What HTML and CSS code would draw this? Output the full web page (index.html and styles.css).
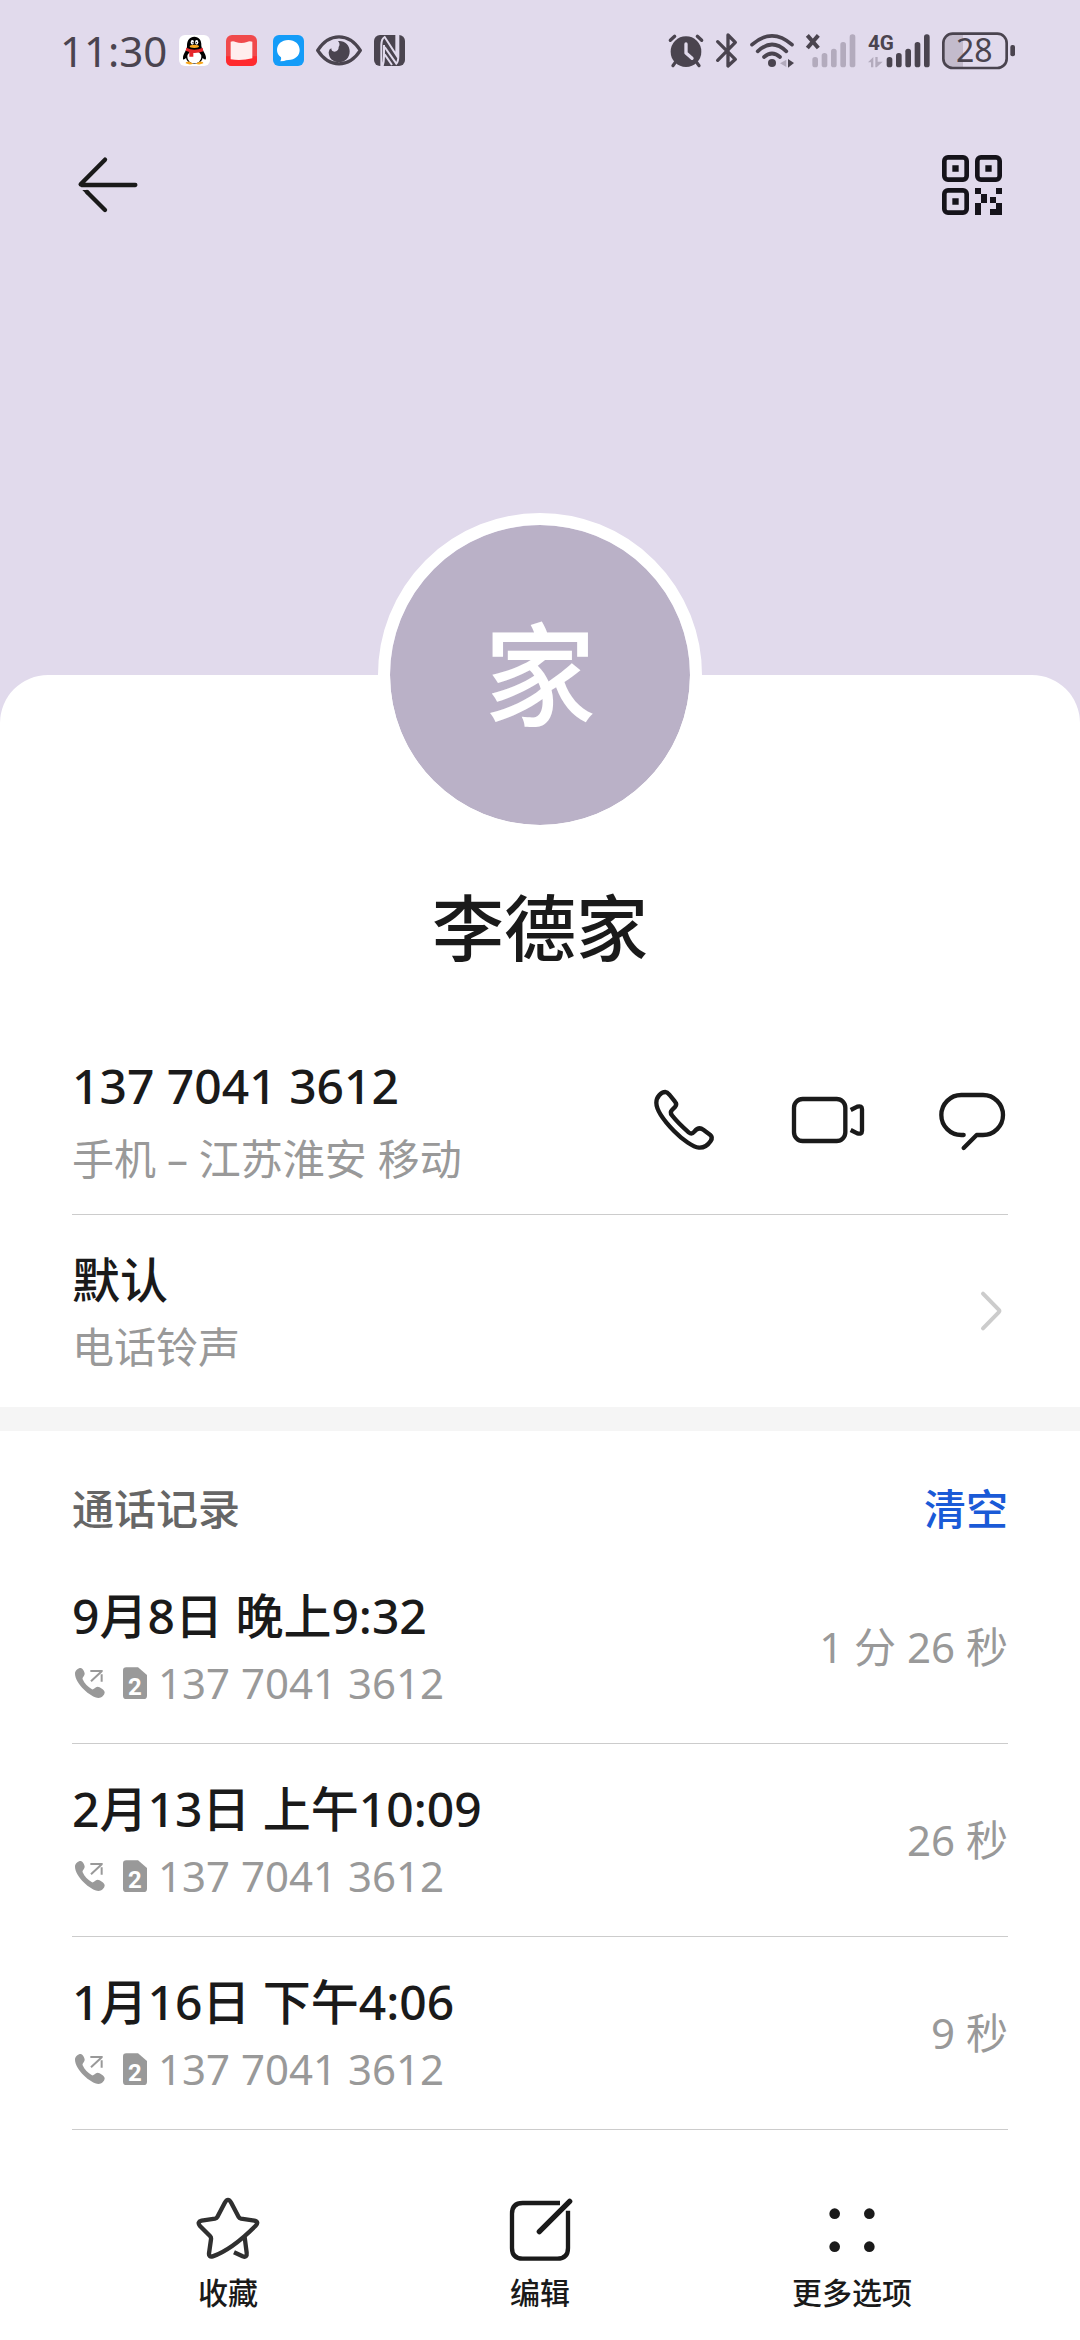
FILE: index.html
```html
<!DOCTYPE html>
<html lang="zh-CN">
<head>
    <meta charset="UTF-8">
    <meta name="viewport" content="width=device-width, initial-scale=1.0">
    <title>李德家</title>
    <link rel="stylesheet" href="styles.css">
</head>
<body>
    <!-- 共用图标 -->
    <svg class="sprite" aria-hidden="true">
        <symbol id="call-out" viewBox="0 0 108 108">
            <path fill="#999" d="M26 9C31 9 38 20 38 26C38 33 30 37 32 43C37 55 48 66 60 73C65 75 69 65 77 65C83 65 98 75 98 82C98 91 88 99 80 99C55 97 9 55 9 26C9 17 18 9 26 9Z"/>
            <path fill="none" stroke="#999" stroke-width="6" d="M55 18H92M57 49L90 18M89 28V50"/>
        </symbol>
    </svg>

    <header class="hero">
        <div class="status-bar">
            <div class="status-left">
                <span class="time">11:30</span>
                <svg class="app-icon" viewBox="0 0 93 93">
                    <rect width="93" height="93" rx="18" fill="#fff"/>
                    <path fill="#000" d="M46 5C60 5 68 16 67 32C68 44 81 56 81 68C81 77 75 73 71 69Q68 86 46 86Q24 86 21 69C17 73 11 77 12 68C12 56 25 44 24 32C24 16 32 5 46 5Z"/>
                    <ellipse cx="46" cy="66" rx="21" ry="19" fill="#fff"/>
                    <ellipse cx="40" cy="22" rx="5" ry="7" fill="#fff"/>
                    <ellipse cx="53" cy="22" rx="5" ry="7" fill="#fff"/>
                    <circle cx="42" cy="23" r="2"/>
                    <circle cx="52" cy="23" r="2"/>
                    <ellipse cx="46" cy="34" rx="14" ry="5" fill="#f9a71c"/>
                    <path fill="#e5262b" d="M22 38Q46 50 71 38L73 49Q58 55 43 54V65H31V51L20 47Z"/>
                    <path fill="#f9a71c" d="M20 85Q20 79 32 80L43 86Q32 91 20 85ZM73 85Q73 79 61 80L50 86Q61 91 73 85Z"/>
                </svg>
                <svg class="app-icon" viewBox="0 0 93 93">
                    <rect width="93" height="93" rx="18" fill="#f04a4c"/>
                    <path fill="#ff2a2e" d="M0 64H93V75Q93 93 75 93H18Q0 93 0 75Z"/>
                    <path fill="#ffeeee" d="M14 20Q22 17 29 21Q46 27 63 21Q70 17 79 20V70Q46 78 14 73Z"/>
                </svg>
                <svg class="app-icon" viewBox="0 0 93 93">
                    <rect width="93" height="93" rx="18" fill="#149cf8"/>
                    <path fill="#fff" d="M46 15C66 15 80 28 80 45C80 62 66 75 46 75Q39 75 33 78L22 79Q26 74 24 67C16 61 12 53 12 45C12 28 26 15 46 15Z"/>
                </svg>
                <svg class="eye-icon" viewBox="0 0 138 93">
                    <path fill="none" stroke="#4a444f" stroke-width="10" stroke-linejoin="round" d="M5 46C40-8 98-8 133 46C98 100 40 100 5 46Z"/>
                    <path fill="#4a444f" d="M66 18C86 16 101 30 101 49C101 69 87 82 69 82C51 82 38 69 38 52Q39 42 46 40Q46 50 55 50Q68 49 68 36Q74 27 66 18Z"/>
                </svg>
                <svg class="app-icon" viewBox="0 0 93 93">
                    <rect width="93" height="93" rx="18" fill="#4a444f"/>
                    <path fill="none" stroke="#e1daec" stroke-width="6" d="M22 93V30Q22 12 32 6L67 60V0M30 30V62Q30 82 26 93M32 36L67 86Q73 80 73 62V0M32 58L54 90"/>
                </svg>
            </div>
            <div class="status-right">
                <svg class="alarm-icon" viewBox="0 0 108 120">
                    <circle cx="54" cy="62" r="46" fill="#4a444f"/>
                    <path fill="none" stroke="#4a444f" stroke-width="10" stroke-linecap="round" d="M7 28L20 16M88 16L101 28M22 94L15 104M86 94L93 104"/>
                    <path fill="none" stroke="#e1daec" stroke-width="10" stroke-linecap="round" stroke-linejoin="round" d="M54 39V66L72 82"/>
                </svg>
                <svg class="bluetooth-icon" viewBox="0 0 66 120">
                    <path fill="none" stroke="#4a444f" stroke-width="10" stroke-linecap="round" stroke-linejoin="round" d="M5 32L58 85L36 105V12L58 34L5 88"/>
                </svg>
                <svg class="wifi-icon" viewBox="0 0 132 120">
                    <path fill="none" stroke="#4a444f" stroke-width="11" stroke-linecap="round" d="M6 41Q66-12 126 41M23 61Q66 20 109 61M42 78Q66 57 90 78"/>
                    <circle cx="66" cy="96" r="12" fill="#4a444f"/>
                    <path fill="#b3abbd" d="M90 97L109 86V108Z"/>
                    <path fill="#4a444f" d="M114 84L132 96L114 110Z"/>
                </svg>
                <svg class="signal-icon" viewBox="0 0 150 120">
                    <path stroke="#4a444f" stroke-width="12" d="M4 13L37 51M37 13L4 51"/>
                    <g fill="#b3abbd">
                        <rect x="19" y="78" width="17" height="31" rx="8"/>
                        <rect x="47" y="66" width="17" height="43" rx="8"/>
                        <rect x="75" y="53" width="17" height="56" rx="8"/>
                        <rect x="103" y="33" width="17" height="76" rx="8"/>
                        <rect x="131" y="10" width="17" height="99" rx="8"/>
                    </g>
                </svg>
                <svg class="network-icon" viewBox="0 0 186 120">
                    <text class="network-type" x="0" y="57">4G</text>
                    <path fill="#b3abbd" d="M0 94L16 78V109H9V94ZM22 78H29V92H44L26 109H22Z"/>
                    <g fill="#4a444f">
                        <rect x="56" y="78" width="17" height="31" rx="8"/>
                        <rect x="84" y="66" width="17" height="43" rx="8"/>
                        <rect x="112" y="53" width="17" height="56" rx="8"/>
                        <rect x="140" y="33" width="17" height="76" rx="8"/>
                        <rect x="168" y="10" width="17" height="99" rx="8"/>
                    </g>
                </svg>
                <svg class="battery-icon" viewBox="0 0 219 120">
                    <path fill="#c3bbcc" d="M63 8V111H32Q4 111 4 83V36Q4 8 32 8Z"/>
                    <rect x="4" y="8" width="190" height="103" rx="28" fill="none" stroke="#4a444f" stroke-width="8"/>
                    <rect x="205" y="42" width="14" height="34" rx="6" fill="#4a444f"/>
                    <text class="battery-level" x="97" y="93" text-anchor="middle">28</text>
                </svg>
            </div>
        </div>
        <nav class="toolbar">
            <button class="icon-button" aria-label="返回">
                <svg viewBox="0 0 216 216">
                    <path class="line" d="M99 32L26 106L30 108H190"/>
                    <path class="line" d="M45 129L99 183"/>
                    <path fill="#1a1a1a" d="M31 123H48L54 130L45 137Z"/>
                </svg>
            </button>
            <button class="icon-button" aria-label="二维码">
                <svg viewBox="0 0 216 216">
                    <g fill="none" stroke="#15131a" stroke-width="14">
                        <rect x="25" y="25" width="67" height="67" rx="11"/>
                        <rect x="124" y="25" width="67" height="67" rx="11"/>
                        <rect x="25" y="124" width="67" height="67" rx="11"/>
                    </g>
                    <path fill="#15131a" d="M49 49h19v19h-19zM148 49h19v19h-19zM49 148h19v19h-19zM117 117h18v18h-18zM180 117h18v18h-18zM135 135h18v27h-18zM162 144h18v18h-18zM117 162h18v36h-18zM180 162h18v36h-18zM162 180h18v18h-18z"/>
                </svg>
            </button>
        </nav>
    </header>

    <main class="sheet">
        <div class="avatar">家</div>
        <h1 class="name">李德家</h1>

        <section class="row contact">
            <div class="row-text">
                <p class="title">137 7041 3612</p>
                <p class="sub">手机 – 江苏淮安 移动</p>
            </div>
            <div class="actions">
                <button class="icon-button" aria-label="拨打电话">
                    <svg viewBox="0 0 216 216">
                        <path class="line" d="M52 24C58 24 61 28 65 33L81 53C86 58 86 63 81 69L72 78C67 83 67 88 72 94C88 114 105 130 122 145C128 150 134 149 139 143C147 133 156 130 166 137L186 152C193 158 193 164 188 171C180 183 169 192 153 191C136 189 104 168 78 141C52 114 25 79 25 56C25 39 39 24 52 24Z"/>
                    </svg>
                </button>
                <button class="icon-button" aria-label="视频通话">
                    <svg viewBox="0 0 216 216">
                        <rect class="line" x="6" y="45" width="154" height="126" rx="26"/>
                        <path class="line butt" d="M176 78L196 68Q210 64 210 76V140Q210 152 196 148L176 138"/>
                    </svg>
                </button>
                <button class="icon-button" aria-label="发送信息">
                    <svg viewBox="0 0 216 216">
                        <path class="line" d="M83 153H76A60 60 0 0 1 76 33H141A60 60 0 0 1 141 153H122L83 192"/>
                    </svg>
                </button>
            </div>
        </section>

        <section class="row ringtone">
            <div class="row-text">
                <p class="title">默认</p>
                <p class="sub">电话铃声</p>
            </div>
            <svg class="chevron" viewBox="0 0 108 144">
                <path d="M33 20L80 68Q84 72 80 76L33 124"/>
            </svg>
        </section>

        <section class="call-log">
            <div class="log-header">
                <h2>通话记录</h2>
                <button class="clear">清空</button>
            </div>
            <div class="row">
                <div class="row-text">
                    <p class="title">9月8日 晚上9:32</p>
                    <p class="sub">
                        <svg class="call-icon"><use href="#call-out"/></svg>
                        <svg class="sim-icon" viewBox="0 0 102 108">
                            <path d="M31 7H66L93 30V92Q93 102 83 102H31Q21 102 21 92V17Q21 7 31 7Z"/>
                            <text x="57" y="89" text-anchor="middle">2</text>
                        </svg>
                        <span>137 7041 3612</span>
                    </p>
                </div>
                <span class="duration">1 分 26 秒</span>
            </div>
            <div class="row">
                <div class="row-text">
                    <p class="title">2月13日 上午10:09</p>
                    <p class="sub">
                        <svg class="call-icon"><use href="#call-out"/></svg>
                        <svg class="sim-icon" viewBox="0 0 102 108">
                            <path d="M31 7H66L93 30V92Q93 102 83 102H31Q21 102 21 92V17Q21 7 31 7Z"/>
                            <text x="57" y="89" text-anchor="middle">2</text>
                        </svg>
                        <span>137 7041 3612</span>
                    </p>
                </div>
                <span class="duration">26 秒</span>
            </div>
            <div class="row">
                <div class="row-text">
                    <p class="title">1月16日 下午4:06</p>
                    <p class="sub">
                        <svg class="call-icon"><use href="#call-out"/></svg>
                        <svg class="sim-icon" viewBox="0 0 102 108">
                            <path d="M31 7H66L93 30V92Q93 102 83 102H31Q21 102 21 92V17Q21 7 31 7Z"/>
                            <text x="57" y="89" text-anchor="middle">2</text>
                        </svg>
                        <span>137 7041 3612</span>
                    </p>
                </div>
                <span class="duration">9 秒</span>
            </div>
        </section>

        <nav class="bottom-bar">
            <button>
                <svg viewBox="0 0 216 216">
                    <path class="line star" d="M98 27Q108 8 118 27L140 69Q142 73 147 74L187 80Q202 84 191 95C160 126 110 170 62 187Q50 190 51 178L57 136Q58 130 54 126L24 96Q14 84 29 80L69 74Q74 73 76 69Z"/>
                    <path class="line star butt" d="M158 130L164 176Q166 192 152 187L126 175"/>
                </svg>
                收藏
            </button>
            <button>
                <svg viewBox="0 0 216 216">
                    <path class="line butt" d="M168 27H56Q24 27 24 59V162Q24 194 56 194H160Q192 194 192 162V50"/>
                    <path class="line pen" d="M106 113L197 22"/>
                </svg>
                编辑
            </button>
            <button>
                <svg viewBox="0 0 216 216" fill="#1a1a1a">
                    <circle cx="56" cy="59" r="16"/>
                    <circle cx="160" cy="59" r="16"/>
                    <circle cx="56" cy="158" r="16"/>
                    <circle cx="160" cy="158" r="16"/>
                </svg>
                更多选项
            </button>
        </nav>
    </main>
</body>
</html>
```
FILE: styles.css
```css
* {
    margin: 0;
    padding: 0;
    box-sizing: border-box;
}
body {
    min-height: 100vh;
    display: flex;
    flex-direction: column;
    background-color: #e1daec;
    color: #1a1a1a;
    font-family: "Noto Sans", "Noto Sans CJK SC", sans-serif;
}
button {
    background: none;
    border: none;
    color: inherit;
    font-family: inherit;
    cursor: pointer;
}
svg {
    display: block;
    flex-shrink: 0;
    overflow: visible;
}
.sprite {
    display: none;
}
.line {
    fill: none;
    stroke: #1a1a1a;
    stroke-width: 13;
    stroke-linecap: round;
    stroke-linejoin: round;
}
.butt {
    stroke-linecap: butt;
}
.star {
    stroke: #303030;
}
.pen {
    stroke-width: 16;
}

/* 顶部区域 */
.hero {
    padding-bottom: 406px;
}
.status-bar {
    display: flex;
    justify-content: space-between;
    align-items: center;
    height: 101px;
    padding: 0 65px 0 60px;
    color: #4a444f;
}
.status-left, .status-right {
    display: flex;
    align-items: center;
    gap: 12px;
}
.time {
    font-size: 42px;
    line-height: 60px;
}
.app-icon {
    width: 31px;
    height: 31px;
}
.app-icon + .app-icon {
    margin-left: 4px;
}
.eye-icon {
    width: 46px;
    height: 31px;
}
.status-right svg {
    height: 40px;
}
.alarm-icon {
    width: 36px;
}
.bluetooth-icon {
    width: 22px;
}
.wifi-icon {
    width: 44px;
}
.signal-icon {
    width: 50px;
}
.network-icon {
    width: 62px;
}
.battery-icon {
    width: 73px;
}
.network-type {
    font-family: Roboto, sans-serif;
    font-size: 62px;
    font-weight: 700;
    fill: #4a444f;
}
.battery-level {
    font-size: 96px;
    fill: #4a444f;
}
.toolbar {
    display: flex;
    justify-content: space-between;
    padding: 48px 72px;
}
.icon-button, .icon-button svg {
    width: 72px;
    height: 72px;
    display: block;
}

/* 白色面板 */
.sheet {
    flex: 1;
    display: flex;
    flex-direction: column;
    background-color: #fff;
    border-radius: 48px 48px 0 0;
}
.avatar {
    display: flex;
    justify-content: center;
    align-items: center;
    align-self: center;
    width: 324px;
    height: 324px;
    margin-top: -162px;
    border: 12px solid #fff;
    border-radius: 50%;
    background-color: #bab1c7;
    background-clip: padding-box;
    color: #fff;
    font-size: 112px;
    font-weight: 500;
    line-height: 1;
}
.name {
    margin: 42px 72px 0;
    font-size: 72px;
    font-weight: 500;
    line-height: 96px;
    text-align: center;
}
.row {
    display: flex;
    justify-content: space-between;
    align-items: center;
    margin: 0 72px;
    padding: 29px 0;
    border-bottom: 1px solid #ccc;
}
.title {
    font-size: 48px;
    font-weight: 500;
    line-height: 72px;
}
.sub {
    display: flex;
    align-items: center;
    gap: 8px;
    font-size: 42px;
    line-height: 62px;
    color: #999;
}
.contact {
    margin-top: 50px;
    padding: 25px 0 24px;
}
.contact .sub {
    margin-top: 6px;
}
.actions {
    display: flex;
    gap: 72px;
}
.ringtone {
    border-bottom: none;
}
.chevron {
    width: 36px;
    height: 48px;
}
.chevron path {
    fill: none;
    stroke: #ccc;
    stroke-width: 12;
    stroke-linecap: round;
}

/* 通话记录 */
.call-log {
    border-top: 24px solid #f5f5f5;
}
.log-header {
    display: flex;
    justify-content: space-between;
    margin: 48px 72px 12px;
}
.log-header h2, .clear {
    font-size: 42px;
    font-weight: 500;
    line-height: 60px;
    color: #666;
}
.log-header .clear {
    color: #1a5ad7;
}
.call-icon {
    width: 36px;
    height: 36px;
}
.sim-icon {
    width: 34px;
    height: 36px;
    fill: #999;
}
.sim-icon text {
    font-family: Roboto, sans-serif;
    font-size: 72px;
    font-weight: 700;
    fill: #fff;
}
.duration {
    font-size: 42px;
    line-height: 60px;
    color: #999;
}

/* 底部操作栏 */
.bottom-bar {
    display: flex;
    padding: 64px 72px 20px;
}
.bottom-bar button {
    flex: 1;
    display: flex;
    flex-direction: column;
    align-items: center;
    gap: 7px;
    font-size: 30px;
    font-weight: 500;
    line-height: 40px;
}
.bottom-bar svg {
    width: 72px;
    height: 72px;
}
```
